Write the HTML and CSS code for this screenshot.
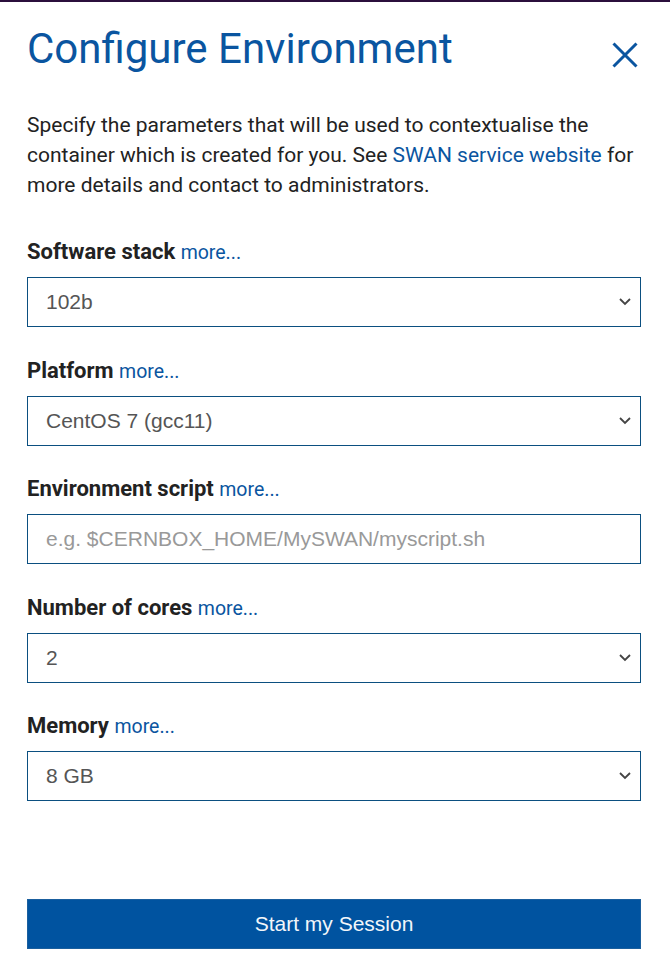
FILE: index.html
```html
<!DOCTYPE html>
<html>
<head>
<meta charset="utf-8">
<link rel="stylesheet" href="styles.css">
</head>
<body>
<div class="topline"></div>
<div class="modal">
  <div class="header">
    <h1 class="title">Configure Environment</h1>
    <button class="close" aria-label="Close">
      <svg width="26" height="26" viewBox="0 0 26 26"><path d="M1.5 1.5 L24.5 24.5 M24.5 1.5 L1.5 24.5" stroke="#0a55a0" stroke-width="3" fill="none"/></svg>
    </button>
  </div>
  <p class="intro">Specify the parameters that will be used to contextualise the container which is created for you. See <a href="#">SWAN service website</a> for more details and contact to administrators.</p>

  <div class="field">
    <label class="label">Software stack <a href="#">more...</a></label>
    <div class="select"><span>102b</span><svg class="chev" width="12" height="8" viewBox="0 0 12 8"><path d="M1 1 L6 6 L11 1" stroke="#444" stroke-width="1.8" fill="none"/></svg></div>
  </div>
  <div class="field">
    <label class="label">Platform <a href="#">more...</a></label>
    <div class="select"><span>CentOS 7 (gcc11)</span><svg class="chev" width="12" height="8" viewBox="0 0 12 8"><path d="M1 1 L6 6 L11 1" stroke="#444" stroke-width="1.8" fill="none"/></svg></div>
  </div>
  <div class="field">
    <label class="label">Environment script <a href="#">more...</a></label>
    <div class="select"><span class="placeholder">e.g. $CERNBOX_HOME/MySWAN/myscript.sh</span></div>
  </div>
  <div class="field">
    <label class="label">Number of cores <a href="#">more...</a></label>
    <div class="select"><span>2</span><svg class="chev" width="12" height="8" viewBox="0 0 12 8"><path d="M1 1 L6 6 L11 1" stroke="#444" stroke-width="1.8" fill="none"/></svg></div>
  </div>
  <div class="field">
    <label class="label">Memory <a href="#">more...</a></label>
    <div class="select"><span>8 GB</span><svg class="chev" width="12" height="8" viewBox="0 0 12 8"><path d="M1 1 L6 6 L11 1" stroke="#444" stroke-width="1.8" fill="none"/></svg></div>
  </div>

  <button class="start">Start my Session</button>
</div>
</body>
</html>
```
FILE: styles.css
```css
html, body {
  margin: 0;
  padding: 0;
  background: #fff;
}
body {
  font-family: Roboto, "Liberation Sans", sans-serif;
  color: #222;
}
.topline {
  height: 2px;
  background: #2b0f3c;
}
.modal {
  padding: 0 29px 0 27px;
}
.header {
  display: flex;
  justify-content: space-between;
  align-items: flex-start;
  padding-top: 23px;
}
.title {
  margin: 0;
  font-weight: 400;
  font-size: 42px;
  line-height: 48px;
  color: #0a55a0;
}
.close {
  border: 0;
  background: none;
  padding: 0;
  margin: 17px 3px 0 0;
  width: 26px;
  height: 26px;
}
.close svg { display: block; }
.intro {
  margin: 37px 0 40px;
  font-size: 21px;
  line-height: 30px;
  color: #222;
}
.intro a { color: #0a55a0; text-decoration: none; }
.field {
  margin-bottom: 31.5px;
}
.label {
  display: block;
  font-weight: 700;
  font-size: 22px;
  line-height: 24px;
  margin-bottom: 12px;
  color: #222;
}
.label a {
  font-weight: 400;
  color: #0a55a0;
  text-decoration: none;
  font-size: 19.5px;
}
.select {
  box-sizing: border-box;
  height: 50px;
  border: 1px solid #0b4f80;
  display: flex;
  align-items: center;
  justify-content: space-between;
  padding: 0 9px 0 18px;
  font-family: "Liberation Sans", Arial, sans-serif;
  font-size: 21px;
  color: #555;
}
.placeholder { color: #999; }
.chev { display: block; }
.start {
  display: block;
  width: 100%;
  height: 50px;
  margin-top: 98px;
  background: #0053a0;
  border: 1px solid #1a5f9e;
  color: #f2f6fa;
  font-family: "Liberation Sans", Arial, sans-serif;
  font-size: 21px;
}
```
